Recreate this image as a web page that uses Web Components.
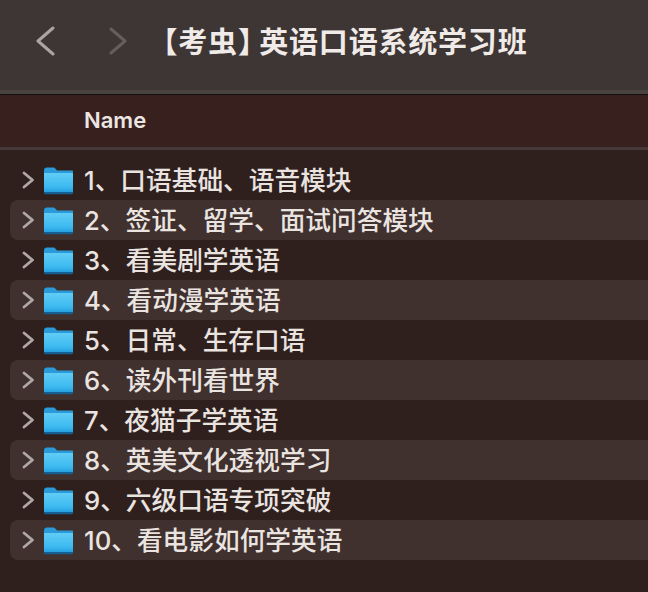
<!DOCTYPE html>
<html>
<head>
<meta charset="utf-8">
<style>
html, body { margin: 0; padding: 0; }
body { width: 648px; height: 592px; overflow: hidden; background: #2f201e; font-family: "Inter", "Noto Sans CJK SC", sans-serif; }
</style>
</head>
<body>
<finder-window>
  <finder-toolbar title="考虫" rest="英语口语系统学习班"></finder-toolbar>
  <finder-header>Name</finder-header>
  <finder-list>
    <finder-row>1、口语基础、语音模块</finder-row>
    <finder-row alt>2、签证、留学、面试问答模块</finder-row>
    <finder-row>3、看美剧学英语</finder-row>
    <finder-row alt>4、看动漫学英语</finder-row>
    <finder-row>5、日常、生存口语</finder-row>
    <finder-row alt>6、读外刊看世界</finder-row>
    <finder-row>7、夜猫子学英语</finder-row>
    <finder-row alt>8、英美文化透视学习</finder-row>
    <finder-row>9、六级口语专项突破</finder-row>
    <finder-row alt>10、看电影如何学英语</finder-row>
  </finder-list>
</finder-window>
<script>
class FinderWindow extends HTMLElement {
  constructor() {
    super();
    this.attachShadow({ mode: "open" }).innerHTML = `<style>
:host { display: flex; flex-direction: column; width: 648px; height: 592px; }
</style><slot></slot>`;
  }
}

class FinderToolbar extends HTMLElement {
  constructor() {
    super();
    this.attachShadow({ mode: "open" }).innerHTML = `<style>
:host { display: flex; align-items: center; box-sizing: border-box; height: 95px; padding: 0 0 13px 35px; background: #3e3634;
  border-bottom: 1px solid #141010; box-shadow: inset 0 -5px 0 -1px #4a4341; }
svg { display: block; fill: none; stroke-linecap: round; stroke-linejoin: round; }
.back { stroke: #aaa5a3; stroke-width: 3; }
.fwd { stroke: #645e5c; stroke-width: 3; margin-left: 54px; }
h1 { margin: 0 0 0 36px; font: 700 29px/1 "Noto Sans CJK SC", sans-serif; letter-spacing: .8px; color: #f0ebe8; white-space: nowrap; }
.open, .close { font-feature-settings: "halt"; }
.close { margin-right: 6px; }
</style>
<svg class="back" width="20" height="30" viewBox="0 0 20 30"><path d="M18 2 3 15l15 13"/></svg>
<svg class="fwd" width="18" height="30" viewBox="0 0 18 30"><path d="M2 3l14 12L2 27"/></svg>
<h1><span class="open">【</span><span class="name"></span><span class="close">】</span><span class="rest"></span></h1>`;
    this.shadowRoot.querySelector(".name").textContent = this.getAttribute("title");
    this.shadowRoot.querySelector(".rest").textContent = this.getAttribute("rest");
  }
}

class FinderHeader extends HTMLElement {
  constructor() {
    super();
    this.attachShadow({ mode: "open" }).innerHTML = `<style>
:host { display: flex; align-items: center; box-sizing: border-box; height: 55px; padding: 0 0 3px 84px; background: #38201f;
  border-bottom: 3px solid #47393a; font: 600 22px/1 "Inter", sans-serif; color: #ece6e3; }
</style><slot></slot>`;
  }
}

class FinderList extends HTMLElement {
  constructor() {
    super();
    this.attachShadow({ mode: "open" }).innerHTML = `<style>
:host { display: flex; flex-direction: column; padding: 10px 0 0 10px; flex: 1; background: #2f201e; }
</style><slot></slot>`;
  }
}

class FinderRow extends HTMLElement {
  constructor() {
    super();
    this.attachShadow({ mode: "open" }).innerHTML = `<style>
:host { display: flex; align-items: center; box-sizing: border-box; height: 40px; padding-left: 12px; border-radius: 8px 0 0 8px;
  font: 500 25.7px/1 "Inter", "Noto Sans CJK SC", sans-serif; color: #eae4e1; white-space: nowrap; }
:host([alt]) { background: #40302e; }
.arrow { display: block; fill: none; stroke: #b0a8a5; stroke-width: 2.8; stroke-linecap: round; stroke-linejoin: round; }
.folder { display: block; margin: 1px 11px 0 9px; }
.label { display: block; padding-top: 2px; }
</style>
<svg class="arrow" width="13" height="20" viewBox="0 0 13 20"><path d="M2 3l8.500 7L2 17"/></svg>
<svg class="folder" width="29" height="28" viewBox="0 0 29 28">
  <defs><linearGradient id="f" x1="0" y1="0" x2="0" y2="1"><stop offset="0" stop-color="#62cdf6"/><stop offset=".7" stop-color="#3bb8ef"/><stop offset="1" stop-color="#1f96d9"/></linearGradient></defs>
  <path fill="#2b9ad8" d="M0 3.500C0 1.500 1.200.5 3 .5h6c1.200 0 1.800.4 2.500 1.300L13 3.500h15c.6 0 1 .4 1 1V9H0z"/>
  <path fill="url(#f)" d="M0 6h28c.6 0 1 .4 1 1v18c0 1-.6 1.500-1.500 1.500h-26C.6 26.500 0 26 0 25z"/>
  <path fill="#155f92" d="M0 25h29v.5c0 1-.7 1.800-1.700 1.800H1.700C.7 27.300 0 26.500 0 25.500z"/>
</svg>
<span class="label"><slot></slot></span>`;
  }
}

customElements.define("finder-window", FinderWindow);
customElements.define("finder-toolbar", FinderToolbar);
customElements.define("finder-header", FinderHeader);
customElements.define("finder-list", FinderList);
customElements.define("finder-row", FinderRow);
</script>
</body>
</html>
